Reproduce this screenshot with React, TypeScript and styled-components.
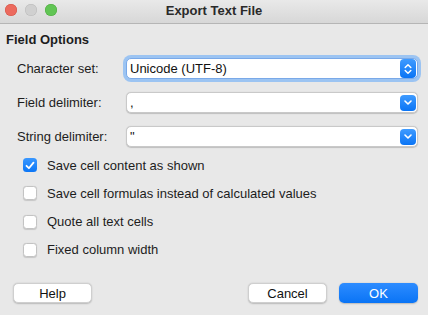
import React from 'react'
import styled, { createGlobalStyle } from 'styled-components'

const GlobalStyle = createGlobalStyle`
  html, body {
    margin: 0;
    padding: 0;
    background: #e8e8e8;
  }
  * {
    box-sizing: border-box;
  }
`

const Window = styled.div`
  width: 428px;
  height: 315px;
  background: #e8e8e8;
  font-family: 'Liberation Sans', Arial, sans-serif;
  font-size: 13px;
  color: #1d1d1d;
  display: flex;
  flex-direction: column;
  overflow: hidden;
`

const TitleBar = styled.div`
  height: 24px;
  flex: none;
  display: flex;
  align-items: center;
  position: relative;
  background: linear-gradient(#e9e9e9, #d7d7d7);
  border-bottom: 1px solid #b5b5b5;
`

const Lights = styled.div`
  display: flex;
  gap: 8px;
  padding-left: 5px;
  margin-top: -3px;
`

const Light = styled.span<{ $color: string; $edge: string }>`
  width: 12px;
  height: 12px;
  border-radius: 50%;
  background: ${(p) => p.$color};
  box-shadow: inset 0 0 0 0.5px ${(p) => p.$edge};
`

const Title = styled.div`
  position: absolute;
  left: 0;
  right: 0;
  top: 3px;
  text-align: center;
  font-weight: bold;
  font-size: 13px;
  color: #2a2a2a;
  pointer-events: none;
`

const Body = styled.div`
  flex: 1;
  display: flex;
  flex-direction: column;
  padding: 8px 10px 0 6px;
`

const SectionTitle = styled.div`
  font-weight: bold;
  line-height: 16px;
  height: 16px;
`

const Form = styled.div`
  display: grid;
  grid-template-columns: 109px 292px;
  row-gap: 13px;
  margin-top: 10px;
  padding-left: 11px;
  align-items: center;
`

const Label = styled.div`
  line-height: 21px;
`

const Select = styled.div<{ $focused?: boolean }>`
  height: 21px;
  background: #fff;
  border-radius: 5px;
  display: flex;
  align-items: center;
  justify-content: space-between;
  padding: 0 1px 0 3px;
  border: 0.5px solid ${(p) => (p.$focused ? '#7aa9e8' : '#c9c9c9')};
  box-shadow: ${(p) =>
    p.$focused
      ? '0 0 0 3px #9cc4f2'
      : '0 0.5px 1px rgba(0, 0, 0, 0.18)'};
  font-size: 13px;
  color: #111;
`

const Arrow = styled.span<{ $tall?: boolean }>`
  width: 16px;
  height: ${(p) => (p.$tall ? '19px' : '16px')};
  border-radius: 4px;
  background: linear-gradient(#3f9bff, #0a74f5);
  display: flex;
  align-items: center;
  justify-content: center;
  flex: none;
`

const Checks = styled.div`
  display: flex;
  flex-direction: column;
  gap: 14.3px;
  margin-top: 11px;
  padding-left: 17px;
`

const CheckRow = styled.label`
  display: flex;
  align-items: center;
  gap: 10px;
  height: 14px;
`

const Box = styled.span<{ $checked?: boolean }>`
  width: 14px;
  height: 14px;
  border-radius: 3.5px;
  flex: none;
  display: flex;
  align-items: center;
  justify-content: center;
  background: ${(p) => (p.$checked ? 'linear-gradient(#3a98ff, #0b76f6)' : '#fff')};
  border: ${(p) => (p.$checked ? 'none' : '0.5px solid #c3c3c3')};
  box-shadow: ${(p) => (p.$checked ? 'none' : '0 0.5px 1px rgba(0, 0, 0, 0.15)')};
`

const Footer = styled.div`
  display: flex;
  align-items: center;
  gap: 12px;
  margin-top: auto;
  padding: 0 0 12px 7px;
`

const Button = styled.button<{ $primary?: boolean }>`
  width: 79px;
  height: 20px;
  border-radius: 5px;
  font-family: 'Liberation Sans', Arial, sans-serif;
  font-size: 13px;
  padding: 0;
  border: ${(p) => (p.$primary ? 'none' : '0.5px solid #cfcfcf')};
  background: ${(p) => (p.$primary ? 'linear-gradient(#2d8cff, #0a74f5)' : '#fff')};
  color: ${(p) => (p.$primary ? '#fff' : '#111')};
  box-shadow: 0 0.5px 1.5px rgba(0, 0, 0, 0.2);
`

const Spacer = styled.div`
  flex: 1;
`

const Chevron: React.FC<{ up?: boolean }> = ({ up }) => (
  <svg width="8" height="5" viewBox="0 0 8 5">
    <path
      d={up ? 'M1 4 L4 1 L7 4' : 'M1 1 L4 4 L7 1'}
      fill="none"
      stroke="#fff"
      strokeWidth="1.6"
      strokeLinecap="round"
      strokeLinejoin="round"
    />
  </svg>
)

const options = [
  { label: 'Save cell content as shown', checked: true },
  { label: 'Save cell formulas instead of calculated values', checked: false },
  { label: 'Quote all text cells', checked: false },
  { label: 'Fixed column width', checked: false },
]

const App: React.FC = () => {
  return (
    <Window>
      <GlobalStyle />
      <TitleBar>
        <Lights>
          <Light $color="#ec6a5e" $edge="#d05245" />
          <Light $color="#d0d0d0" $edge="#b9b9b9" />
          <Light $color="#61c554" $edge="#4da83f" />
        </Lights>
        <Title>Export Text File</Title>
      </TitleBar>
      <Body>
        <SectionTitle>Field Options</SectionTitle>
        <Form>
          <Label>Character set:</Label>
          <Select $focused>
            <span>Unicode (UTF-8)</span>
            <Arrow $tall>
              <svg width="8" height="12" viewBox="0 0 8 12">
                <path
                  d="M1.2 4.5 L4 1.7 L6.8 4.5 M1.2 7.5 L4 10.3 L6.8 7.5"
                  fill="none"
                  stroke="#fff"
                  strokeWidth="1.5"
                  strokeLinecap="round"
                  strokeLinejoin="round"
                />
              </svg>
            </Arrow>
          </Select>
          <Label>Field delimiter:</Label>
          <Select>
            <span>,</span>
            <Arrow>
              <Chevron />
            </Arrow>
          </Select>
          <Label>String delimiter:</Label>
          <Select>
            <span>"</span>
            <Arrow>
              <Chevron />
            </Arrow>
          </Select>
        </Form>
        <Checks>
          {options.map((o) => (
            <CheckRow key={o.label}>
              <Box $checked={o.checked}>
                {o.checked && (
                  <svg width="10" height="9" viewBox="0 0 10 9">
                    <path
                      d="M1.5 4.8 L3.9 7.2 L8.5 1.6"
                      fill="none"
                      stroke="#fff"
                      strokeWidth="1.8"
                      strokeLinecap="round"
                      strokeLinejoin="round"
                    />
                  </svg>
                )}
              </Box>
              <span>{o.label}</span>
            </CheckRow>
          ))}
        </Checks>
        <Footer>
          <Button>Help</Button>
          <Spacer />
          <Button>Cancel</Button>
          <Button $primary>OK</Button>
        </Footer>
      </Body>
    </Window>
  )
}

export default App
